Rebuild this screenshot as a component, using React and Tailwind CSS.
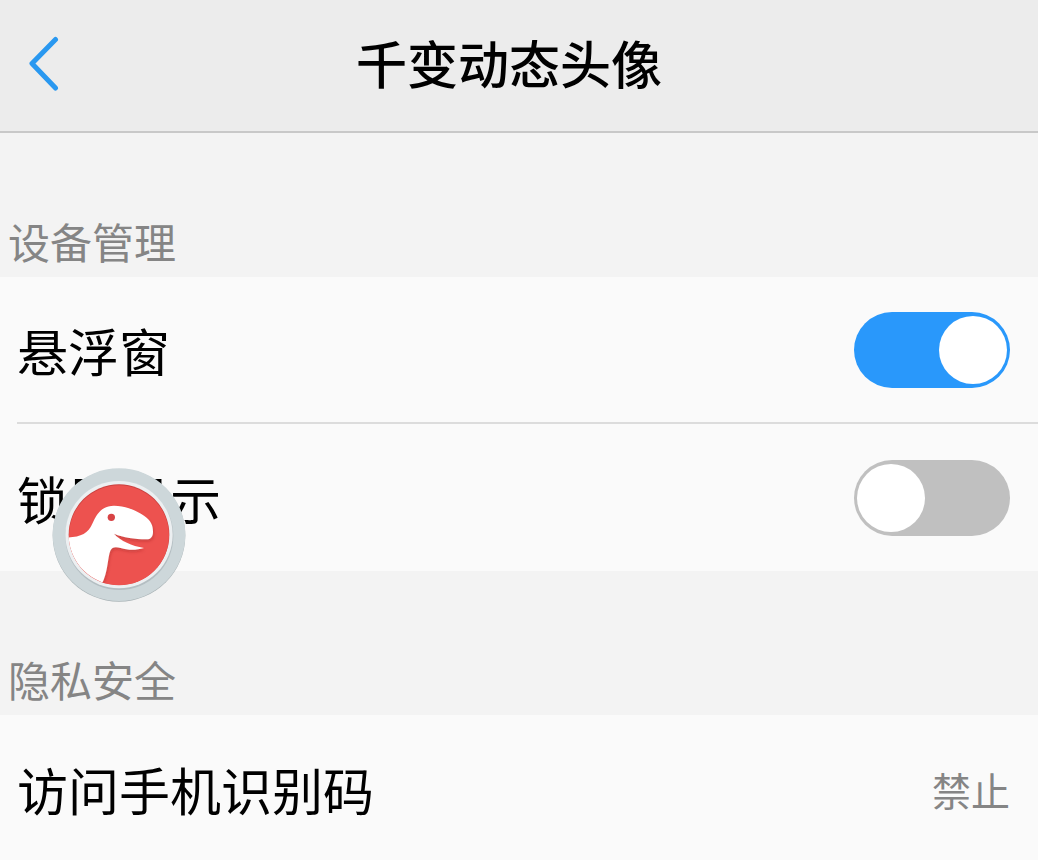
import { useId, useState } from "react";

function DinoBadge() {
  return (
    <svg viewBox="156 85 402 402" className="block size-[134px]" aria-hidden="true">
      <defs>
        <clipPath id="dino-disc">
          <circle cx="357" cy="285" r="151" />
        </clipPath>
        <filter id="dino-shade" x="-20%" y="-20%" width="140%" height="140%">
          <feDropShadow dx="2" dy="6" stdDeviation="5" floodColor="#7f1d1d" floodOpacity="0.3" />
        </filter>
      </defs>
      <circle cx="357" cy="287" r="199" fill="#a9b3b6" />
      <circle cx="357" cy="285" r="199" fill="#cdd7da" />
      <circle cx="358" cy="289" r="162" fill="#b4bec2" />
      <circle cx="357" cy="285" r="161" fill="#eceff1" />
      <circle cx="357" cy="285" r="151" fill="#c9403f" />
      <circle cx="357" cy="287" r="150" fill="#ed524f" />
      <g clipPath="url(#dino-disc)">
        <path
          filter="url(#dino-shade)"
          fill="#fff"
          d="M190 294C232 294 258 286 272 262C286 236 296 198 342 198C378 198 408 212 432 228C452 241 459 256 459 276C459 290 453 299 439 299C404 298 371 294 342 282C362 304 395 318 432 325C408 332 385 332 362 325C346 320 336 322 331 333C323 351 324 399 305 434L290 470H150V294Z"
        />
      </g>
      <circle cx="334" cy="233" r="11" fill="#d84345" />
    </svg>
  );
}

function Section({ title, children }) {
  return (
    <section>
      <h2 className="flex h-36 items-end px-2 pb-1.5 text-[42px] leading-[60px] text-[#858585]">{title}</h2>
      <div className="bg-[#fafafa]">{children}</div>
    </section>
  );
}

function SwitchRow({ label, defaultOn = false }) {
  const id = useId();
  const [on, setOn] = useState(defaultOn);

  return (
    <div className="flex h-[147px] items-center justify-between pr-7">
      <label htmlFor={id} className="text-[51px] leading-[72px]">
        {label}
      </label>
      <input
        id={id}
        type="checkbox"
        role="switch"
        checked={on}
        onChange={(e) => setOn(e.target.checked)}
        className="flex h-[76px] w-[156px] shrink-0 cursor-pointer appearance-none items-center rounded-full bg-[#c0c0c0] px-[3px] before:size-[68px] before:rounded-full before:bg-white before:content-[''] checked:justify-end checked:bg-[#2998fb]"
      />
    </div>
  );
}

export default function App() {
  return (
    <div className="relative min-h-screen bg-[#f3f3f3] font-['Noto_Sans_CJK_SC',sans-serif] text-black">
      <header className="flex h-[133px] items-center border-b-2 border-[#c8c8c8] bg-[#ececec] pr-[106px] pb-1">
        <button type="button" aria-label="返回" className="flex w-[86px] shrink-0 cursor-pointer pl-7">
          <svg viewBox="0 0 32 56" className="h-14 w-8" fill="none" stroke="#2998f0" strokeWidth="5" strokeLinecap="round" strokeLinejoin="round">
            <path d="M27.500 3.500L4 27.500L27.500 52" />
          </svg>
        </button>
        <h1 className="flex-1 pb-1 text-center text-[51px] leading-[72px] font-medium">千变动态头像</h1>
      </header>

      <main>
        <Section title="设备管理">
          <div className="ml-[17px] divide-y-2 divide-[#dcdcdc]">
            <SwitchRow label="悬浮窗" defaultOn />
            <SwitchRow label="锁屏显示" />
          </div>
        </Section>

        <Section title="隐私安全">
          <button type="button" className="flex h-[147px] w-full cursor-pointer items-center justify-between pr-7 pl-[17px] text-left">
            <span className="text-[51px] leading-[72px]">访问手机识别码</span>
            <span className="text-[39px] leading-[56px] text-[#858585]">禁止</span>
          </button>
        </Section>
      </main>

      {/* floating bubble, sits over the list */}
      <button type="button" aria-label="悬浮球" className="absolute top-[468px] left-[52px] cursor-pointer rounded-full">
        <DinoBadge />
      </button>
    </div>
  );
}
